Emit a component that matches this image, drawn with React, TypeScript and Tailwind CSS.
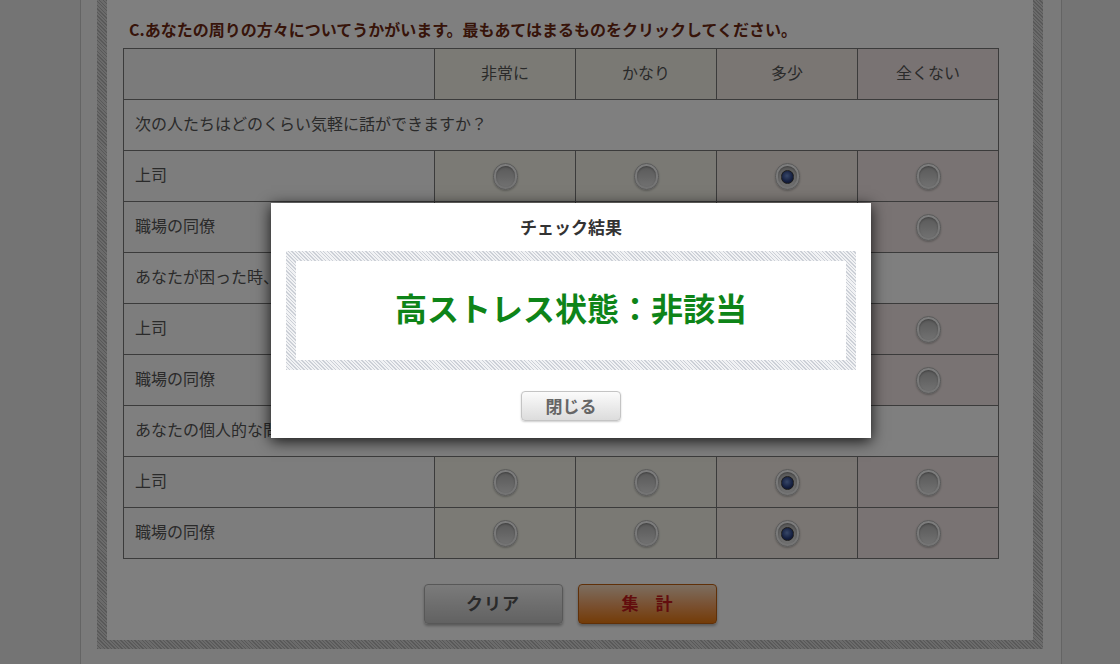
import React from 'react';

const cols = ['非常に', 'かなり', '多少', '全くない'];
const colBg = ['bg-[#f6f5ea]', 'bg-[#f4f3e9]', 'bg-[#f4ece6]', 'bg-[#f2e7e6]'];

type Row = { kind: 'q'; text: string } | { kind: 'a'; label: string; sel: number };

const rows: Row[] = [
  { kind: 'q', text: '次の人たちはどのくらい気軽に話ができますか？' },
  { kind: 'a', label: '上司', sel: 2 },
  { kind: 'a', label: '職場の同僚', sel: 2 },
  { kind: 'q', text: 'あなたが困った時、次の人たちはどのくらい頼りになりますか？' },
  { kind: 'a', label: '上司', sel: 2 },
  { kind: 'a', label: '職場の同僚', sel: 2 },
  { kind: 'q', text: 'あなたの個人的な問題を相談したら、次の人たちはどのくらいきいてくれますか？' },
  { kind: 'a', label: '上司', sel: 2 },
  { kind: 'a', label: '職場の同僚', sel: 2 },
];

function Radio({ checked }: { checked: boolean }) {
  return (
    <span className="w-[25px] h-[27px] rounded-full border border-[#b4b4b4] bg-[linear-gradient(#fcfcfc,#e8e8e8)] shadow-[0_1px_2px_rgba(0,0,0,0.25)] flex items-center justify-center">
      <span className="w-[19px] h-[21px] rounded-full bg-[linear-gradient(#b4b4b4,#e2e2e2)] shadow-[inset_0_1px_2px_rgba(0,0,0,0.3)] flex items-center justify-center">
        {checked && (
          <span className="w-[13px] h-[14px] rounded-full border border-[#3a3a3a] bg-[radial-gradient(circle_at_45%_40%,#6f8fd0,#2a3f80_60%,#16204a)]" />
        )}
      </span>
    </span>
  );
}

export default function App() {
  return (
    <div className="relative h-[664px] overflow-hidden bg-[#e8e8e8] font-['Noto_Sans_CJK_JP','Liberation_Sans',sans-serif]">
      <div className="flex h-full">
        <div className="w-[80px] shrink-0" />
        <div className="w-[982px] shrink-0 border-x border-[#c8c8c8] bg-[#f4f4f4] pl-[16px] pr-[18px]">
          {/* hatched frame */}
          <div className="px-[10px] pb-[9px] bg-[repeating-linear-gradient(45deg,#b2b2b2_0,#b2b2b2_1px,#d6d6d6_1px,#d6d6d6_2.5px)]">
            <div className="bg-white pl-[16px] pb-[16px]">
              <div className="pt-[19px] mb-[9px] pl-[6px] text-[16px] leading-[20px] font-bold text-[#6e2812]">
                C.あなたの周りの方々についてうかがいます。最もあてはまるものをクリックしてください。
              </div>

              <div className="grid grid-cols-[311px_repeat(4,141px)] w-[876px] border-l border-t border-[#777] text-[16px] text-[#555]">
                <div className="h-[51px] border-r border-b border-[#777] bg-[#f6f6f6]" />
                {cols.map((c, i) => (
                  <div key={c} className={`h-[51px] border-r border-b border-[#777] ${colBg[i]} flex items-center justify-center pb-[5px]`}>
                    {c}
                  </div>
                ))}
                {rows.map((r, ri) =>
                  r.kind === 'q' ? (
                    <div key={ri} className="col-span-5 h-[51px] border-r border-b border-[#777] bg-white flex items-center pl-[11px] pb-[5px]">
                      {r.text}
                    </div>
                  ) : (
                    <React.Fragment key={ri}>
                      <div className="h-[51px] border-r border-b border-[#777] bg-[#fafafa] flex items-center pl-[11px] pb-[4px]">
                        {r.label}
                      </div>
                      {cols.map((c, i) => (
                        <div key={c} className={`h-[51px] border-r border-b border-[#777] ${colBg[i]} flex items-center justify-center pt-[1px]`}>
                          <Radio checked={r.sel === i} />
                        </div>
                      ))}
                    </React.Fragment>
                  )
                )}
              </div>

              <div className="flex justify-center gap-[15px] mt-[25px] pr-[16px]">
                <button className="w-[139px] h-[40px] rounded-[4px] border border-[#b0b0b0] bg-[linear-gradient(#f6f6f6,#c4c4c4)] shadow-[0_2px_3px_rgba(0,0,0,0.3)] text-[17px] font-bold text-[#555] tracking-[1px] pb-[3px]">
                  クリア
                </button>
                <button className="w-[139px] h-[40px] rounded-[4px] border border-[#c06010] bg-[linear-gradient(#f8dcc0,#f3a060_55%,#e87810)] shadow-[0_2px_3px_rgba(0,0,0,0.3)] text-[17px] font-bold text-[#c41a1a] pb-[3px]">
                  集　計
                </button>
              </div>
            </div>
          </div>
        </div>
      </div>

      {/* overlay */}
      <div className="absolute inset-0 bg-black/50" />

      {/* modal */}
      <div className="absolute left-[271px] top-[203px] w-[600px] h-[235px] bg-white shadow-[0_3px_14px_rgba(0,0,0,0.85)] pt-[12px] px-[15px]">
        <div className="text-center text-[17px] leading-[24px] font-bold text-[#333]">チェック結果</div>
        <div className="mt-[12px] w-[570px] p-[10px] bg-[repeating-linear-gradient(45deg,#ccd0d7_0,#ccd0d7_1px,#f1f2f4_1px,#f1f2f4_2.5px)]">
          <div className="h-[99px] bg-white flex items-center justify-center text-[32px] font-bold text-[#0e8418] pb-[8px]">
            高ストレス状態：非該当
          </div>
        </div>
        <div className="flex justify-center mt-[21px]">
          <button className="w-[100px] h-[30px] rounded-[4px] border border-[#c4c4c4] bg-[linear-gradient(#fbfbfb,#dcdcdc)] shadow-[0_1px_2px_rgba(0,0,0,0.2)] text-[17px] leading-none font-bold text-[#666] pb-[2px]">
            閉じる
          </button>
        </div>
      </div>
    </div>
  );
}
